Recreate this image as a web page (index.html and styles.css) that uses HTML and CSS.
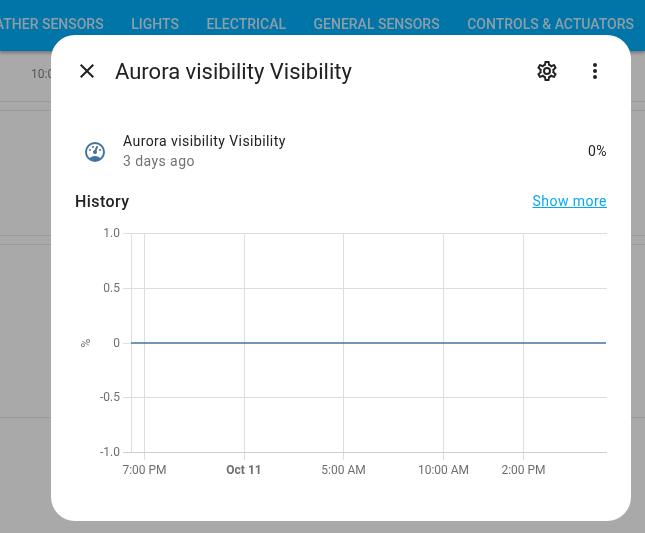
FILE: index.html
```html
<!DOCTYPE html>
<html lang="en">
<head>
<meta charset="utf-8">
<title>Aurora visibility Visibility</title>
<link rel="stylesheet" href="styles.css">
</head>
<body>
<header class="topbar">
  <nav class="tabs">
    <span>Weather sensors</span>
    <span>Lights</span>
    <span>Electrical</span>
    <span>General sensors</span>
    <span>Controls &amp; actuators</span>
  </nav>
</header>
<main class="backdrop">
  <div class="time-label">10:00 AM</div>
  <div class="rule rule-a"></div>
  <div class="rule rule-b"></div>
  <div class="rule rule-c"></div>
  <div class="rule rule-b"></div>
  <div class="rule rule-d"></div>
</main>
<section class="dialog">
  <div class="dialog-head">
    <svg class="icon icon-close" viewBox="0 0 24 24"><path d="M19,6.41L17.59,5L12,10.59L6.41,5L5,6.41L10.59,12L5,17.59L6.41,19L12,13.41L17.59,19L19,17.59L13.41,12L19,6.41Z"/></svg>
    <h1 class="dialog-title">Aurora visibility Visibility</h1>
    <svg class="icon icon-cog" viewBox="0 0 24 24"><path d="M12,8A4,4 0 0,1 16,12A4,4 0 0,1 12,16A4,4 0 0,1 8,12A4,4 0 0,1 12,8M12,10A2,2 0 0,0 10,12A2,2 0 0,0 12,14A2,2 0 0,0 14,12A2,2 0 0,0 12,10M10,22C9.75,22 9.54,21.82 9.5,21.58L9.13,18.93C8.5,18.68 7.96,18.34 7.44,17.94L4.95,18.95C4.73,19.03 4.46,18.95 4.34,18.73L2.34,15.27C2.21,15.05 2.27,14.78 2.46,14.63L4.57,12.97L4.5,12L4.57,11L2.46,9.37C2.27,9.22 2.21,8.95 2.34,8.73L4.34,5.27C4.46,5.05 4.73,4.96 4.95,5.05L7.44,6.05C7.96,5.66 8.5,5.32 9.13,5.07L9.5,2.42C9.54,2.18 9.75,2 10,2H14C14.25,2 14.46,2.18 14.5,2.42L14.87,5.07C15.5,5.32 16.04,5.66 16.56,6.05L19.05,5.05C19.27,4.96 19.54,5.05 19.66,5.27L21.66,8.73C21.79,8.95 21.73,9.22 21.54,9.37L19.43,11L19.5,12L19.43,13L21.54,14.63C21.73,14.78 21.79,15.05 21.66,15.27L19.66,18.73C19.54,18.95 19.27,19.04 19.05,18.95L16.56,17.95C16.04,18.34 15.5,18.68 14.87,18.93L14.5,21.58C14.46,21.82 14.25,22 14,22H10M11.25,4L10.88,6.61C9.68,6.86 8.62,7.5 7.85,8.39L5.44,7.35L4.69,8.65L6.8,10.2C6.4,11.37 6.4,12.64 6.8,13.8L4.68,15.36L5.43,16.66L7.86,15.62C8.63,16.5 9.68,17.14 10.87,17.38L11.24,20H12.76L13.13,17.39C14.32,17.14 15.37,16.5 16.14,15.62L18.57,16.66L19.32,15.36L17.2,13.81C17.6,12.64 17.6,11.37 17.2,10.2L19.31,8.65L18.56,7.35L16.15,8.39C15.38,7.5 14.32,6.86 13.12,6.62L12.75,4H11.25Z"/></svg>
    <svg class="icon icon-dots" viewBox="0 0 24 24"><path d="M12,16A2,2 0 0,1 14,18A2,2 0 0,1 12,20A2,2 0 0,1 10,18A2,2 0 0,1 12,16M12,10A2,2 0 0,1 14,12A2,2 0 0,1 12,14A2,2 0 0,1 10,12A2,2 0 0,1 12,10M12,4A2,2 0 0,1 14,6A2,2 0 0,1 12,8A2,2 0 0,1 10,6A2,2 0 0,1 12,4Z"/></svg>
  </div>
  <div class="state-row">
    <svg class="icon icon-gauge" viewBox="0 0 24 24"><path d="M12,2A10,10 0 0,0 2,12A10,10 0 0,0 12,22A10,10 0 0,0 22,12A10,10 0 0,0 12,2M12,4A8,8 0 0,1 20,12C20,14.4 19,16.5 17.3,18C15.9,16.7 14,16 12,16C10,16 8.2,16.7 6.7,18C5,16.5 4,14.4 4,12A8,8 0 0,1 12,4M14,5.89C13.62,5.9 13.26,6.15 13.1,6.54L11.81,9.77L11.71,10C11,10.13 10.41,10.6 10.14,11.26C9.73,12.29 10.23,13.45 11.26,13.86C12.29,14.27 13.45,13.77 13.86,12.74C14.12,12.08 14,11.32 13.57,10.76L13.67,10.5L14.96,7.29L14.97,7.26C15.17,6.75 14.92,6.17 14.41,5.96C14.28,5.91 14.15,5.89 14,5.89M10,6A1,1 0 0,0 9,7A1,1 0 0,0 10,8A1,1 0 0,0 11,7A1,1 0 0,0 10,6M7,9A1,1 0 0,0 6,10A1,1 0 0,0 7,11A1,1 0 0,0 8,10A1,1 0 0,0 7,9M17,9A1,1 0 0,0 16,10A1,1 0 0,0 17,11A1,1 0 0,0 18,10A1,1 0 0,0 17,9Z"/></svg>
    <div class="state-text">
      <div class="state-name">Aurora visibility Visibility</div>
      <div class="state-time">3 days ago</div>
    </div>
    <div class="state-value">0%</div>
  </div>
  <div class="history-head">
    <h2 class="history-title">History</h2>
    <a class="show-more" href="#">Show more</a>
  </div>
  <svg class="chart" width="532" height="254" viewBox="0 0 532 254">
    <g class="grid">
      <path d="M48 8.5H532M48 63.5H532M48 118.5H56M48 172.5H532"/>
      <path d="M56.5 8V227M69.5 8V235M169.5 8V235M268.5 8V235M368.5 8V235M448.5 8V235"/>
    </g>
    <g class="axis">
      <path d="M48 227.5H532"/>
    </g>
    <path class="series" d="M56 118H531"/>
    <g class="y-labels">
      <text x="45" y="12">1.0</text>
      <text x="45" y="67">0.5</text>
      <text x="45" y="122">0</text>
      <text x="45" y="176">-0.5</text>
      <text x="45" y="231">-1.0</text>
    </g>
    <text class="unit" transform="translate(14.5 118) rotate(-90)">%</text>
    <g class="x-labels">
      <text x="69.5" y="249">7:00 PM</text>
      <text class="strong" x="169" y="249">Oct 11</text>
      <text x="268.5" y="249">5:00 AM</text>
      <text x="368.5" y="249">10:00 AM</text>
      <text x="448.5" y="249">2:00 PM</text>
    </g>
  </svg>
</section>
</body>
</html>
```
FILE: styles.css
```css
* { box-sizing: border-box; }
html, body { height: 100%; }
body {
  margin: 0;
  overflow: hidden;
  background: #a9a9a9;
  font-family: Roboto, sans-serif;
  color: #212121;
}
.topbar {
  height: 51px;
  background: #0275a8;
  box-shadow: 0 2px 3px rgba(0, 0, 0, .3);
  overflow: hidden;
}
.tabs {
  display: flex;
  justify-content: flex-end;
  gap: 27.5px;
  padding: 16px 11px 0 0;
  font-size: 14px;
  font-weight: 500;
  line-height: 16px;
  text-transform: uppercase;
  color: #8c9fa9;
  white-space: nowrap;
  will-change: transform;
}
.tabs span { flex: none; }
.backdrop { padding-top: 16px; }
.time-label {
  margin-left: 31px;
  font-size: 12px;
  line-height: 14px;
  color: #555;
  white-space: nowrap;
  will-change: transform;
}
.rule { height: 1px; background: #9a9a9a; }
.rule-a { margin-top: 20px; }
.rule-b { margin-top: 8px; }
.rule-c { margin-top: 124px; }
.rule-d { margin-top: 172px; }
.dialog {
  position: absolute;
  left: 51px;
  top: 35px;
  width: 580px;
  height: 486px;
  padding: 0 24px;
  background: #fff;
  border-radius: 24px;
  will-change: transform;
}
.icon { display: block; flex: none; width: 24px; height: 24px; fill: #212121; }
.dialog-head {
  display: flex;
  align-items: center;
  height: 72px;
}
.icon-close { margin-right: 16px; }
.dialog-title {
  flex: 1;
  margin: 0;
  padding-top: 2px;
  font-size: 22px;
  font-weight: 400;
  line-height: 28px;
}
.icon-cog { margin-right: 24px; }
.icon-dots { margin-right: 0; }
.state-row {
  display: flex;
  align-items: center;
  height: 40px;
  margin-top: 25px;
}
.icon-gauge { margin: 0 16px 0 8px; fill: #44739e; }
.state-text { flex: 1; margin-top: -2px; }
.state-name { font-size: 14px; line-height: 20px; letter-spacing: .43px; color: #212121; }
.state-time { font-size: 14px; line-height: 20px; letter-spacing: .43px; color: #727272; }
.state-value { margin-bottom: 2px; font-size: 14px; letter-spacing: .47px; }
.history-head {
  display: flex;
  align-items: center;
  justify-content: space-between;
  height: 24px;
  margin-top: 18px;
}
.history-title { margin: 0; font-size: 16px; font-weight: 500; line-height: 24px; letter-spacing: .43px; }
.show-more { margin-bottom: 2px; font-size: 14px; letter-spacing: .47px; color: #03a9f4; }
.chart { display: block; margin-top: 11px; }
.grid path { fill: none; stroke: #dedede; stroke-width: 1; }
.axis path { fill: none; stroke: #cfcfcf; stroke-width: 1; }
.series { fill: none; stroke: #44739e; stroke-width: 1.5; }
.chart text { font-family: Roboto, sans-serif; font-size: 12px; fill: #6f6f6f; }
.y-labels text { text-anchor: end; }
.x-labels text { text-anchor: middle; }
.x-labels .strong { font-weight: 700; }
.unit { text-anchor: middle; font-size: 12px; }
```
